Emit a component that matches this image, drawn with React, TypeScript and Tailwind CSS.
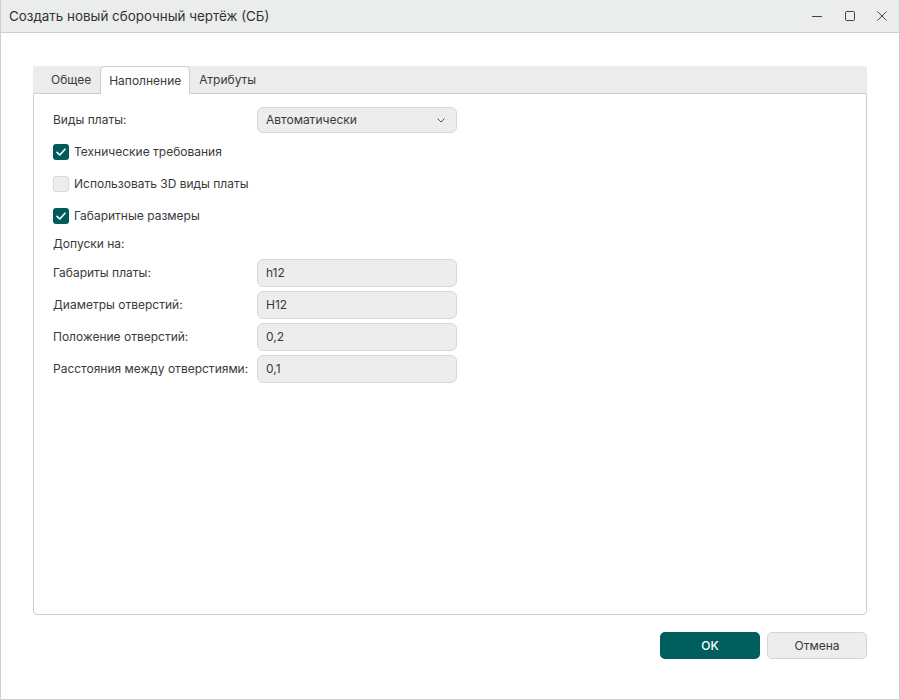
import { ReactNode } from 'react';

const font = { fontFamily: 'Inter, "Noto Sans", sans-serif' };

function Check({ checked, label }: { checked?: boolean; label: string }) {
  return (
    <div className="flex h-[32px] items-center">
      <span
        className={
          checked
            ? 'flex h-[16px] w-[16px] items-center justify-center rounded-[3px] bg-[#005c5b]'
            : 'h-[16px] w-[16px] rounded-[3px] border border-[#d5dad9] bg-[#ecedec]'
        }
      >
        {checked && (
          <svg width="12" height="12" viewBox="0 0 12 12" fill="none">
            <path d="M2 6.3 4.8 9 10 3.2" stroke="white" strokeWidth="1.6" strokeLinecap="round" strokeLinejoin="round" />
          </svg>
        )}
      </span>
      <span className="ml-[5px]">{label}</span>
    </div>
  );
}

function Field({ label, value }: { label: string; value: string }) {
  return (
    <div className="flex items-center">
      <span className="w-[204px] whitespace-nowrap">{label}</span>
      <div className="flex h-[28px] w-[200px] items-center rounded-[6px] border border-[#d5dad9] bg-[#ecedec] pl-[8px]">
        {value}
      </div>
    </div>
  );
}

function Tab({ children, active }: { children: ReactNode; active?: boolean }) {
  return active ? (
    <div className="relative z-10 -mb-px flex h-[28px] items-center rounded-t-[5px] border border-b-0 border-[#c9d0cf] bg-white px-[8px]">
      {children}
    </div>
  ) : (
    <div className="flex h-[27px] items-center px-[9px]">{children}</div>
  );
}

export default function App() {
  return (
    <div
      style={font}
      className="flex h-[700px] w-[900px] flex-col border border-t-0 border-[#c9d0cf] bg-white text-[12px] text-[#3a3a3a]"
    >
      {/* Title bar */}
      <header className="flex h-[33px] shrink-0 items-center border-b border-[#c9d0cf] bg-[#ebeded] pl-[8px]">
        <span className="flex-1 text-[13.4px] text-[#333]">Создать новый сборочный чертёж (СБ)</span>
        <div className="flex h-full items-center">
          <div className="flex w-[33px] justify-center">
            <svg width="12" height="12" viewBox="0 0 12 12">
              <path d="M1 6.5h10" stroke="#444" strokeWidth="1" />
            </svg>
          </div>
          <div className="flex w-[33px] justify-center">
            <svg width="12" height="12" viewBox="0 0 12 12" fill="none">
              <rect x="1.5" y="1.5" width="9" height="9" rx="1.2" stroke="#444" strokeWidth="1" />
            </svg>
          </div>
          <div className="flex w-[33px] justify-center pr-[2px]">
            <svg width="12" height="12" viewBox="0 0 12 12" fill="none">
              <path d="M1.5 1.5l9 9M10.5 1.5l-9 9" stroke="#444" strokeWidth="1" />
            </svg>
          </div>
        </div>
      </header>

      {/* Content */}
      <div className="flex flex-1 flex-col px-[32px] pt-[33px]">
        <div className="flex h-[27px] shrink-0 items-end bg-[#ebeceb] pl-[9px]">
          <Tab>Общее</Tab>
          <Tab active>Наполнение</Tab>
          <Tab>Атрибуты</Tab>
        </div>

        <div className="flex-1 rounded-b-[4px] border border-[#c9d0cf] pl-[19px] pt-[10px]">
          <div className="flex h-[32px] items-center">
            <span className="w-[204px]">Виды платы:</span>
            <div className="flex h-[26px] w-[200px] items-center justify-between rounded-[6px] border border-[#d5dad9] bg-[#ecedec] pl-[8px] pr-[10px]">
              <span>Автоматически</span>
              <svg width="10" height="10" viewBox="0 0 10 10" fill="none">
                <path d="M1.5 3.5 5 7l3.5-3.5" stroke="#555" strokeWidth="1" />
              </svg>
            </div>
          </div>
          <Check checked label="Технические требования" />
          <Check label="Использовать 3D виды платы" />
          <Check checked label="Габаритные размеры" />
          <div className="flex h-[23px] items-center">Допуски на:</div>
          <div className="mt-[4px] flex flex-col gap-[4px]">
            <Field label="Габариты платы:" value="h12" />
            <Field label="Диаметры отверстий:" value="H12" />
            <Field label="Положение отверстий:" value="0,2" />
            <Field label="Расстояния между отверстиями:" value="0,1" />
          </div>
        </div>

        {/* Footer */}
        <div className="mb-[40px] mt-[17px] flex h-[27px] shrink-0 justify-end gap-[7px]">
          <button className="w-[100px] rounded-[5px] bg-[#005f5e] font-medium text-white">OK</button>
          <button className="w-[100px] rounded-[5px] border border-[#d0d6d5] bg-[#ecedec] text-[#3a3a3a]">Отмена</button>
        </div>
      </div>
    </div>
  );
}
